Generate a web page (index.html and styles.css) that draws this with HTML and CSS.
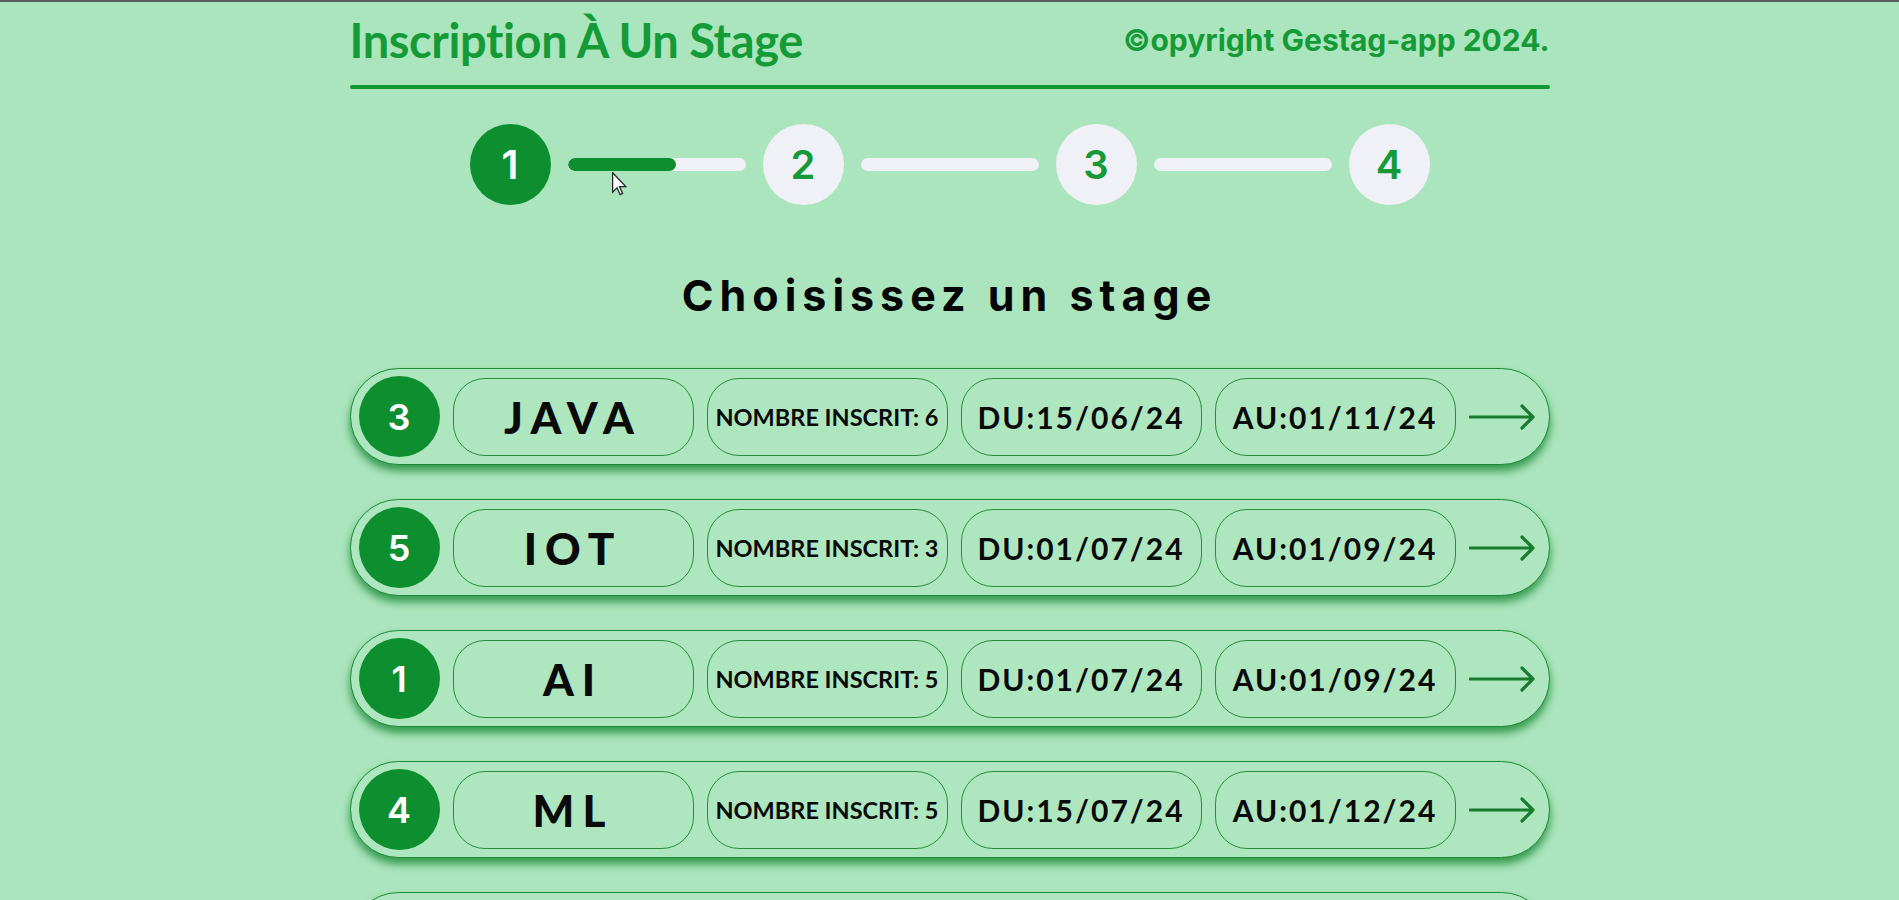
FILE: index.html
```html
<!DOCTYPE html>
<html lang="fr">
<head>
<meta charset="utf-8">
<title>Inscription À Un Stage</title>
<link rel="stylesheet" href="styles.css">
</head>
<body>
<div class="page">
  <header class="header">
    <h1 class="title">Inscription À Un Stage</h1>
    <div class="copyright">©opyright Gestag-app 2024.</div>
  </header>
  <div class="rule"></div>

  <div class="steps">
    <div class="step active">1</div>
    <div class="bar"><div class="bar-fill"></div></div>
    <div class="step">2</div>
    <div class="bar"></div>
    <div class="step">3</div>
    <div class="bar"></div>
    <div class="step">4</div>
    <svg class="cursor" width="15" height="24" viewBox="0 0 12 19"><path d="M0.5 0.5 L0.5 16 L4 12.5 L6.5 18 L8.5 17 L6 11.5 L11 11.5 Z" fill="#fff" stroke="#222" stroke-width="1"/></svg>
  </div>

  <h2 class="heading">Choisissez un stage</h2>

  <div class="list">
    <div class="card">
      <div class="num">3</div>
      <div class="pill name">JAVA</div>
      <div class="pill count">NOMBRE INSCRIT: 6</div>
      <div class="pill date">DU:15/06/24</div>
      <div class="pill date">AU:01/11/24</div>
      <svg class="arrow" width="67" height="30" viewBox="0 0 67 30"><path d="M1 15 H64 M53 4 L64 15 L53 26" fill="none" stroke="#177c2c" stroke-width="3.2" stroke-linecap="round" stroke-linejoin="round"/></svg>
    </div>
    <div class="card">
      <div class="num">5</div>
      <div class="pill name">IOT</div>
      <div class="pill count">NOMBRE INSCRIT: 3</div>
      <div class="pill date">DU:01/07/24</div>
      <div class="pill date">AU:01/09/24</div>
      <svg class="arrow" width="67" height="30" viewBox="0 0 67 30"><path d="M1 15 H64 M53 4 L64 15 L53 26" fill="none" stroke="#177c2c" stroke-width="3.2" stroke-linecap="round" stroke-linejoin="round"/></svg>
    </div>
    <div class="card">
      <div class="num">1</div>
      <div class="pill name">AI</div>
      <div class="pill count">NOMBRE INSCRIT: 5</div>
      <div class="pill date">DU:01/07/24</div>
      <div class="pill date">AU:01/09/24</div>
      <svg class="arrow" width="67" height="30" viewBox="0 0 67 30"><path d="M1 15 H64 M53 4 L64 15 L53 26" fill="none" stroke="#177c2c" stroke-width="3.2" stroke-linecap="round" stroke-linejoin="round"/></svg>
    </div>
    <div class="card">
      <div class="num">4</div>
      <div class="pill name">ML</div>
      <div class="pill count">NOMBRE INSCRIT: 5</div>
      <div class="pill date">DU:15/07/24</div>
      <div class="pill date">AU:01/12/24</div>
      <svg class="arrow" width="67" height="30" viewBox="0 0 67 30"><path d="M1 15 H64 M53 4 L64 15 L53 26" fill="none" stroke="#177c2c" stroke-width="3.2" stroke-linecap="round" stroke-linejoin="round"/></svg>
    </div>
    <div class="card">
      <div class="num"></div>
      <div class="pill name"></div>
      <div class="pill count"></div>
      <div class="pill date"></div>
      <div class="pill date"></div>
      <svg class="arrow" width="67" height="30" viewBox="0 0 67 30"><path d="M1 15 H64 M53 4 L64 15 L53 26" fill="none" stroke="#177c2c" stroke-width="3.2" stroke-linecap="round" stroke-linejoin="round"/></svg>
    </div>
  </div>
</div>
</body>
</html>
```

FILE: styles.css
```css
* { box-sizing: border-box; }

html, body {
  margin: 0;
  padding: 0;
}

body {
  background: #abe5bd;
  border-top: 2px solid #5b5d5c;
  font-family: "Lato", "Liberation Sans", sans-serif;
  color: #0a0a0a;
  overflow: hidden;
  height: 900px;
}

.page {
  width: 1200px;
  margin: 0 auto;
}

.header {
  display: flex;
  justify-content: space-between;
  align-items: center;
  height: 56px;
  margin-top: 10px;
}

.title {
  margin: 0;
  font-family: "Lato", sans-serif;
  font-weight: 700;
  font-size: 47px;
  line-height: 1;
  color: #149b37;
  letter-spacing: -0.4px;
}

.copyright {
  font-family: "Inter", sans-serif;
  font-weight: 700;
  font-size: 30px;
  line-height: 1;
  color: #149b37;
}

.rule {
  height: 4px;
  margin-top: 17px;
  border-radius: 2px;
  background: #139934;
}

.steps {
  position: relative;
  display: flex;
  align-items: center;
  justify-content: center;
  gap: 17px;
  margin-top: 35px;
  height: 81px;
}

.step {
  width: 81px;
  height: 81px;
  border-radius: 50%;
  background: #eff1f6;
  color: #149b37;
  display: flex;
  align-items: center;
  justify-content: center;
  font-family: "Inter", sans-serif;
  font-weight: 600;
  font-size: 40px;
  flex: none;
}

.step.active {
  background: #0e8f2f;
  color: #ffffff;
}

.bar {
  width: 178px;
  height: 13px;
  border-radius: 7px;
  background: #eff1f6;
  overflow: hidden;
  flex: none;
}

.bar-fill {
  width: 61%;
  height: 100%;
  border-radius: 7px;
  background: #0e8f2f;
}

.cursor {
  position: absolute;
  left: 262px;
  top: 48px;
}

.heading {
  margin: 69px 0 0;
  text-align: center;
  font-family: "Inter", sans-serif;
  font-weight: 700;
  font-size: 43px;
  line-height: 1;
  letter-spacing: 6px;
  color: #050505;
}

.list {
  display: flex;
  flex-direction: column;
  gap: 34px;
  margin-top: 51px;
}

.card {
  display: flex;
  align-items: center;
  gap: 13px;
  height: 97px;
  padding: 0 11px 0 8px;
  border: 1px solid #1c8a35;
  border-radius: 49px;
  background: #ade6bf;
  box-shadow: 0 6px 8px rgba(14, 128, 40, 0.75);
  flex: none;
}

.num {
  width: 81px;
  height: 81px;
  border-radius: 50%;
  background: #0e8f2f;
  color: #ffffff;
  display: flex;
  align-items: center;
  justify-content: center;
  font-family: "Inter", sans-serif;
  font-weight: 600;
  font-size: 36px;
  flex: none;
}

.pill {
  width: 241px;
  height: 78px;
  border: 1px solid #2a8d3d;
  border-radius: 32px;
  display: flex;
  align-items: center;
  justify-content: center;
  font-family: "Lato", sans-serif;
  font-weight: 700;
  color: #0a0a0a;
  white-space: nowrap;
  flex: none;
}

.pill.name {
  font-size: 44px;
  letter-spacing: 8px;
  font-weight: 900;
}

.pill.count {
  font-size: 23.5px;
  letter-spacing: 0;
}

.pill.date {
  font-size: 30px;
  letter-spacing: 2px;
}

.arrow {
  flex: none;
}
```
